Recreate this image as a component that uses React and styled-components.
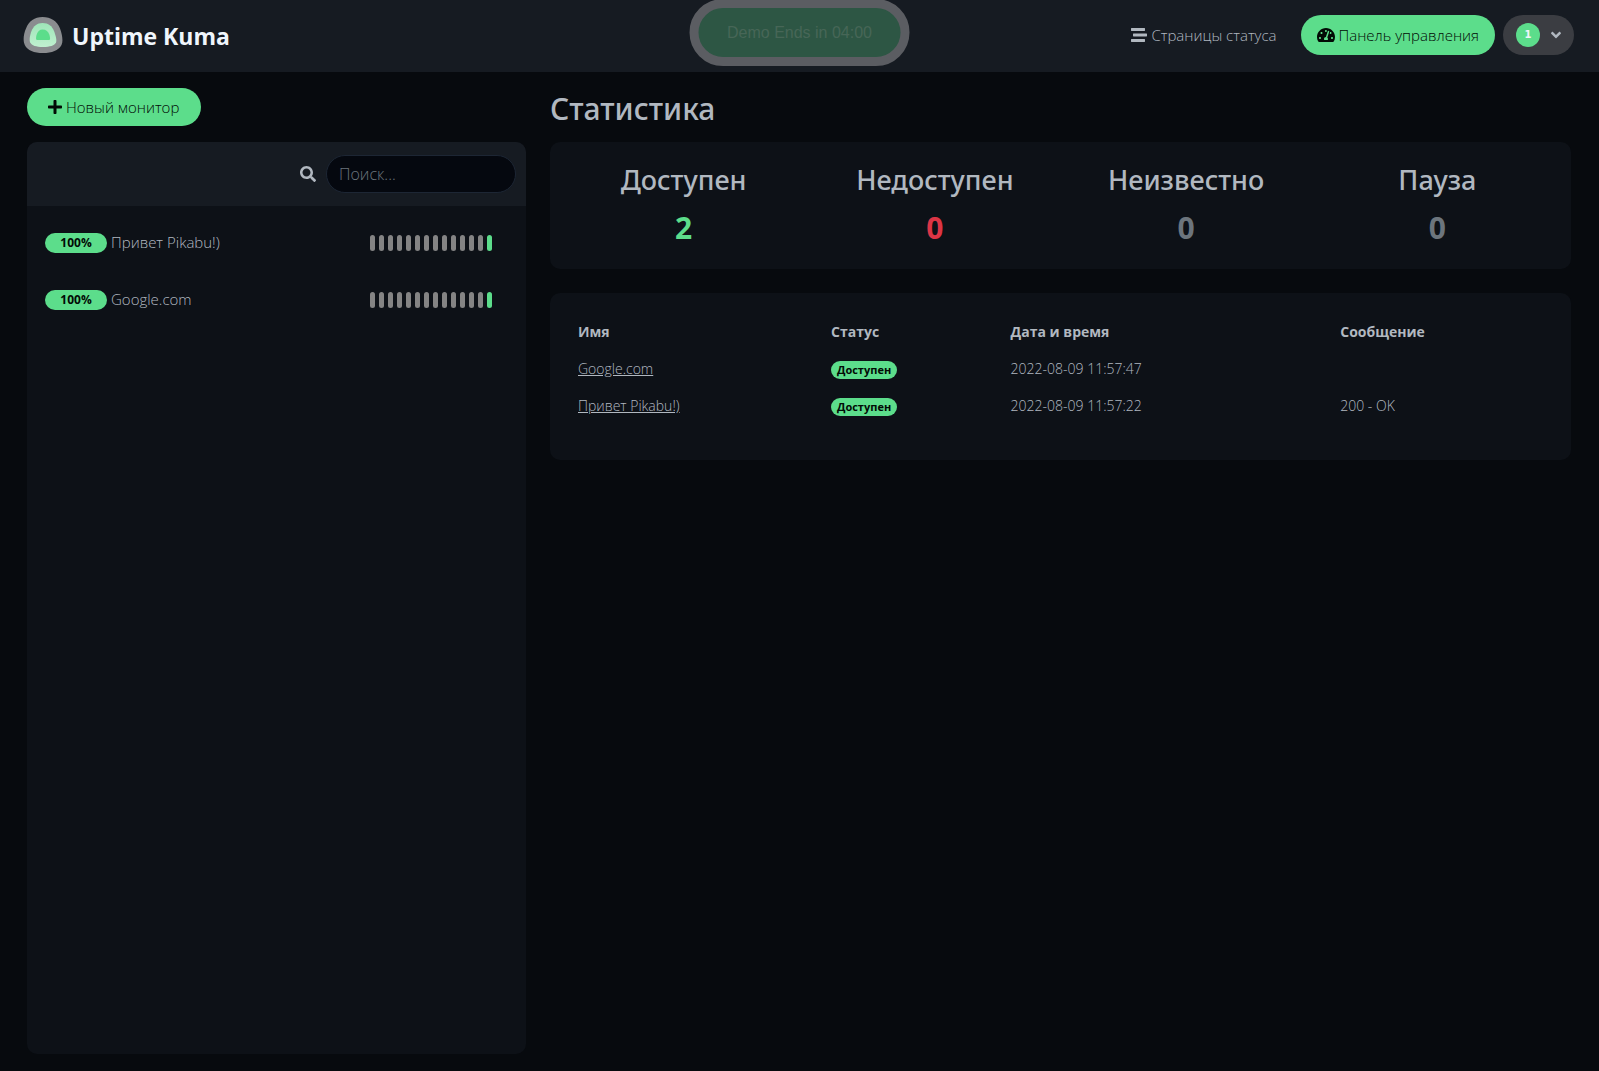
import React, { useState } from "react";
import styled, { createGlobalStyle } from "styled-components";
import {
  FaPlus,
  FaSearch,
  FaStream,
  FaTachometerAlt,
  FaAngleDown,
} from "react-icons/fa";

const GlobalStyle = createGlobalStyle`
  * {
    box-sizing: border-box;
  }
  body {
    margin: 0;
    background: #070a0e;
    color: #b1b8c0;
    font-family: "Open Sans", "Noto Sans", sans-serif;
    font-size: 15px;
    font-weight: 300;
    line-height: 24px;
  }
  button, input {
    font: inherit;
  }
`;

const Page = styled.div`
  display: flex;
  flex-direction: column;
  min-height: 100vh;
`;

const Header = styled.header`
  display: flex;
  align-items: center;
  justify-content: space-between;
  height: 72px;
  padding: 0 25px 0 23px;
  background: #161b22;
`;

const Brand = styled.a`
  display: flex;
  align-items: center;
  gap: 8px;
  color: #f0f6fc;
  font-size: 23px;
  font-weight: 700;
  text-decoration: none;
`;

const Nav = styled.nav`
  display: flex;
  align-items: center;
  gap: 8px;
  padding-bottom: 2px;
`;

const NavLink = styled.a`
  display: flex;
  align-items: center;
  gap: 4px;
  height: 40px;
  padding: 0 16px;
  border-radius: 20px;
  white-space: nowrap;
  text-decoration: none;
  color: ${(props) => (props.$active ? "#020b05" : "#b1b8c0")};
  background: ${(props) => (props.$active ? "#5cdd8b" : "transparent")};
  svg {
    flex: none;
  }
`;

const ProfileButton = styled.button`
  display: flex;
  align-items: center;
  gap: 8px;
  height: 40px;
  padding: 0 10px 0 13px;
  border: none;
  border-radius: 20px;
  background: #3b3d42;
  color: #b1b8c0;
  cursor: pointer;
`;

const Avatar = styled.span`
  width: 24px;
  height: 24px;
  border-radius: 50%;
  background: #5cdd8b;
  color: #f0f6fc;
  font-family: "DejaVu Sans", sans-serif;
  font-size: 10px;
  font-weight: 700;
  text-align: center;
`;

// floats over the header, does not take part in its layout
const DemoTimer = styled.div`
  position: fixed;
  top: -1px;
  left: 50%;
  transform: translateX(-50%);
  padding: 13px 29px 12px;
  border: 9px solid #5b5d62;
  border-radius: 34px;
  background: #2d5644;
  color: #476657;
  font-family: "Liberation Sans", Arial, sans-serif;
  font-size: 16px;
  font-weight: 400;
  white-space: nowrap;
`;

const Main = styled.main`
  flex: 1;
  display: grid;
  grid-template-columns: 499fr 1021fr;
  gap: 24px;
  padding: 16px 28px 17px 27px;
`;

const Column = styled.div`
  display: flex;
  flex-direction: column;
  min-width: 0;
`;

const AddButton = styled.button`
  display: flex;
  align-items: center;
  align-self: flex-start;
  gap: 3px;
  height: 38px;
  margin-bottom: 16px;
  padding: 0 22px 0 20px;
  border: none;
  border-radius: 19px;
  background: #5cdd8b;
  color: #020b05;
  cursor: pointer;
`;

const MonitorList = styled.section`
  flex: 1;
  border-radius: 10px;
  background: #0d1117;
  overflow: hidden;
`;

const ListHeader = styled.div`
  display: flex;
  align-items: center;
  justify-content: flex-end;
  gap: 10px;
  height: 64px;
  padding: 0 10px;
  background: #161b22;
`;

const SearchLabel = styled.label`
  display: flex;
`;

const SearchInput = styled.input`
  width: 190px;
  height: 38px;
  padding: 0 12px;
  border: 1px solid #1d2634;
  border-radius: 19px;
  outline: none;
  background: #05080f;
  color: #b1b8c0;
  font-size: 16px;
  &::placeholder {
    color: #6c757d;
    opacity: 1;
  }
`;

const Items = styled.ul`
  margin: 0;
  padding: 8px 34px 8px 18px;
  list-style: none;
`;

const Item = styled.li`
  display: flex;
  align-items: center;
  gap: 4px;
  height: 57px;
`;

const Uptime = styled.span`
  width: 62px;
  height: 20px;
  border-radius: 10px;
  background: #5cdd8b;
  color: #020b05;
  font-size: 12px;
  font-weight: 700;
  line-height: 20px;
  text-align: center;
`;

const MonitorName = styled.span`
  flex: 1;
  padding-bottom: 2px;
`;

const Beats = styled.div`
  display: flex;
  gap: 4px;
`;

const Beat = styled.span`
  width: 5px;
  height: 16px;
  border-radius: 3px;
  background: ${(props) => (props.$up ? "#5cdd8b" : "#848484")};
`;

const Title = styled.h1`
  margin: 0 0 13px;
  font-family: "Noto Sans", sans-serif;
  font-size: 30px;
  font-weight: 500;
  line-height: 41px;
`;

const Stats = styled.section`
  display: grid;
  grid-template-columns: repeat(4, 1fr);
  margin-bottom: 24px;
  padding: 20px 8px;
  border-radius: 10px;
  background: #0d1117;
  text-align: center;
`;

const StatName = styled.h3`
  margin: 0 0 8px;
  font-family: "Noto Sans", sans-serif;
  font-size: 27px;
  font-weight: 500;
  line-height: 36px;
`;

const StatValue = styled.span`
  display: block;
  color: ${(props) => props.$color};
  font-size: 30px;
  font-weight: 700;
  line-height: 43px;
`;

const Events = styled.section`
  padding: 20px 20px 36px;
  border-radius: 10px;
  background: #0d1117;
`;

const Table = styled.table`
  width: 100%;
  table-layout: fixed;
  border-collapse: collapse;
  font-size: 14px;
  line-height: 21px;
  text-align: left;
  th, td {
    height: 37px;
    padding: 8px;
  }
  th {
    font-weight: 700;
  }
  a {
    color: inherit;
  }
`;

const HeadCell = styled.th`
  width: ${(props) => props.$width};
`;

const Badge = styled.span`
  display: inline-block;
  min-width: 66px;
  height: 18px;
  border-radius: 9px;
  background: #5cdd8b;
  color: #020b05;
  font-size: 11px;
  font-weight: 700;
  line-height: 18px;
  text-align: center;
  vertical-align: bottom;
`;

const Logo = () => (
  <svg width="41" height="38" viewBox="0 0 41 38" aria-hidden="true">
    <defs>
      <linearGradient id="kuma" x1="0" y1="0" x2="0" y2="1">
        <stop offset="0" stopColor="#9ee6b8" />
        <stop offset="1" stopColor="#c0f0d0" />
      </linearGradient>
    </defs>
    <path
      d="M19.500 0C28 0 34 4 37 11.500C39 17 40.500 24 38.500 28C35.500 33.500 29 36 20 36C11 36 4.500 33.500 1.800 28C-0.200 24 0.500 17 3 11.500C6 4 11.500 0 19.500 0Z"
      fill="#8a8c8f"
    />
    <path
      d="M19.500 6C25.500 6 29 9 31 14C32.500 18 34 23 33 25.500C31.500 28.500 27 30 20 30C13 30 8.800 28.500 7.200 25.500C6 23 7 18 8.500 14C10.500 9 14 6 19.500 6Z"
      fill="url(#kuma)"
    />
    <path
      d="M19.500 12.500C23 12.500 25.500 14.500 26.500 18C27.200 21 27.500 23 26 23H14.200C12.700 23 12.800 21 13.500 18C14.500 14.500 16.500 12.500 19.500 12.500Z"
      fill="#5cdd8b"
    />
  </svg>
);

const monitors = [
  { id: 1, name: "Привет Pikabu!)", uptime: "100%" },
  { id: 2, name: "Google.com", uptime: "100%" },
];

const stats = [
  { name: "Доступен", value: 2, color: "#5cdd8b" },
  { name: "Недоступен", value: 0, color: "#dc3545" },
  { name: "Неизвестно", value: 0, color: "#6c757d" },
  { name: "Пауза", value: 0, color: "#6c757d" },
];

const events = [
  { id: 1, name: "Google.com", time: "2022-08-09 11:57:47", msg: "" },
  { id: 2, name: "Привет Pikabu!)", time: "2022-08-09 11:57:22", msg: "200 - OK" },
];

const BEATS = 14;

const HeartbeatBar = () => (
  <Beats>
    {Array.from({ length: BEATS }, (_, i) => (
      <Beat key={i} $up={i === BEATS - 1} />
    ))}
  </Beats>
);

const App = () => {
  const [search, setSearch] = useState("");
  const visible = monitors.filter((m) =>
    m.name.toLowerCase().includes(search.toLowerCase())
  );

  return (
    <Page>
      <GlobalStyle />
      <Header>
        <Brand href="#">
          <Logo />
          Uptime Kuma
        </Brand>
        <Nav>
          <NavLink href="#status">
            <FaStream size={16} />
            Страницы статуса
          </NavLink>
          <NavLink href="#dashboard" $active>
            <FaTachometerAlt size={18} />
            Панель управления
          </NavLink>
          <ProfileButton type="button" aria-label="Профиль">
            <Avatar>1</Avatar>
            <FaAngleDown size={16} />
          </ProfileButton>
        </Nav>
      </Header>
      <DemoTimer>Demo Ends in 04:00</DemoTimer>
      <Main>
        <Column>
          <AddButton type="button">
            <FaPlus size={16} />
            Новый монитор
          </AddButton>
          <MonitorList>
            <ListHeader>
              <SearchLabel htmlFor="search" aria-label="Поиск">
                <FaSearch size={16} />
              </SearchLabel>
              <SearchInput
                id="search"
                type="text"
                placeholder="Поиск..."
                value={search}
                onChange={(e) => setSearch(e.target.value)}
              />
            </ListHeader>
            <Items>
              {visible.map((m) => (
                <Item key={m.id}>
                  <Uptime>{m.uptime}</Uptime>
                  <MonitorName>{m.name}</MonitorName>
                  <HeartbeatBar />
                </Item>
              ))}
            </Items>
          </MonitorList>
        </Column>
        <Column>
          <Title>Статистика</Title>
          <Stats>
            {stats.map((s) => (
              <div key={s.name}>
                <StatName>{s.name}</StatName>
                <StatValue $color={s.color}>{s.value}</StatValue>
              </div>
            ))}
          </Stats>
          <Events>
            <Table>
              <thead>
                <tr>
                  <HeadCell $width="25.8%">Имя</HeadCell>
                  <HeadCell $width="18.3%">Статус</HeadCell>
                  <HeadCell $width="33.6%">Дата и время</HeadCell>
                  <HeadCell>Сообщение</HeadCell>
                </tr>
              </thead>
              <tbody>
                {events.map((e) => (
                  <tr key={e.id}>
                    <td>
                      <a href={`#monitor-${e.id}`}>{e.name}</a>
                    </td>
                    <td>
                      <Badge>Доступен</Badge>
                    </td>
                    <td>{e.time}</td>
                    <td>{e.msg}</td>
                  </tr>
                ))}
              </tbody>
            </Table>
          </Events>
        </Column>
      </Main>
    </Page>
  );
};

export default App;
